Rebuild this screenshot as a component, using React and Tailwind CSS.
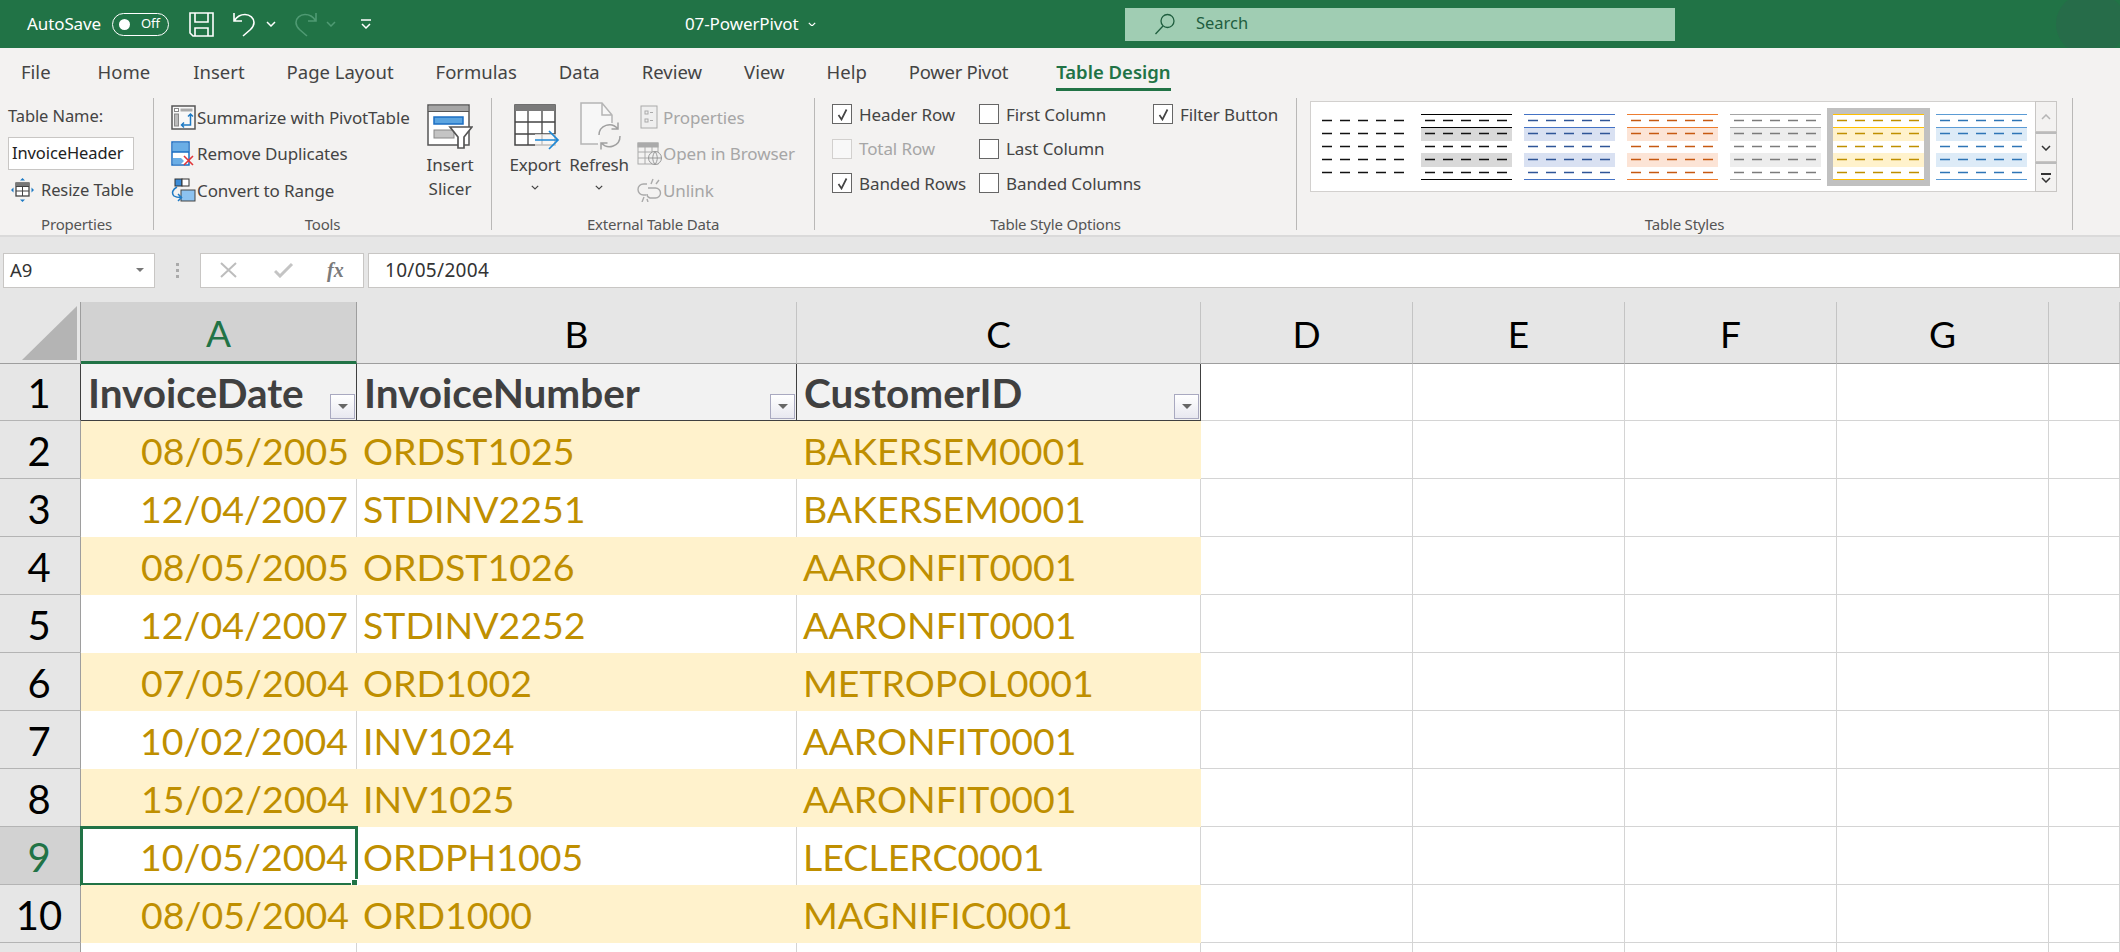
import React from "react";

const ui = "font-['Noto_Sans',sans-serif]";
const cellFont = "font-['Lato',sans-serif]";

// Title bar icons
const SaveIcon = () => (
  <svg width="25" height="25" viewBox="0 0 25 25" fill="none" stroke="#fff" strokeWidth="1.6">
    <path d="M1 1h23v23H4l-3-3z" />
    <path d="M6 1v9h13V1M6 24v-8h13v8" />
  </svg>
);
const UndoIcon = ({ dim }) => (
  <svg width="24" height="26" viewBox="0 0 24 26" fill="none" stroke={dim ? "#4f9a73" : "#fff"} strokeWidth="1.6" className={dim ? "-scale-x-100" : ""}>
    <path d="M1 2v8h8M1.5 9.5C4 5.5 8 3.5 12 3.5c5 0 9 3.5 9 8 0 3-1.5 5-3.5 7L10 25" />
  </svg>
);
const Chevron = ({ color = "#fff", size = 10 }) => (
  <svg width={size} height={size * 0.6} viewBox="0 0 10 6" fill="none" stroke={color} strokeWidth="1.5">
    <path d="M1 1l4 4 4-4" />
  </svg>
);

// Ribbon icons
const PivotIcon = () => (
  <svg width="25" height="25" viewBox="0 0 25 25" fill="none">
    <rect x="1" y="1" width="23" height="23" fill="#f8f8f8" stroke="#555" strokeWidth="1.5" />
    <rect x="3.500" y="3.500" width="4" height="3" fill="#fff" stroke="#888" />
    <rect x="9.500" y="3.500" width="12" height="3" fill="#aaa" />
    <rect x="3.500" y="9" width="4" height="12" fill="#bbb" stroke="#888" />
    <path d="M19.500 9v11H11M17 11.500L19.500 9l2.500 2.500M13 17.500L10.500 20l2.500 2.500" stroke="#1e7ac4" strokeWidth="1.500" />
  </svg>
);
const DuplicatesIcon = () => (
  <svg width="24" height="25" viewBox="0 0 24 25" fill="none">
    <rect x="1" y="1" width="17" height="23" fill="#fff" stroke="#1b6ec2" strokeWidth="1.500" />
    <rect x="2" y="2" width="15" height="9" fill="#6aaee6" />
    <path d="M1 11h17" stroke="#1b6ec2" strokeWidth="1.500" />
    <path d="M2 17h8l3 3-3 3H2z" fill="#6aaee6" />
    <path d="M13 15l9 9M22 15l-9 9" stroke="#e2363a" strokeWidth="1.600" />
  </svg>
);
const ConvertIcon = () => (
  <svg width="25" height="25" viewBox="0 0 25 25" fill="none">
    <rect x="4" y="1" width="7" height="7" fill="#3b8bd6" stroke="#333" />
    <rect x="11" y="1" width="7" height="7" fill="#fff" stroke="#333" />
    <rect x="10" y="12" width="14" height="11" fill="#8cc2f0" stroke="#444" />
    <path d="M6 9C2 11 0 15 3 18c1.500 1 4 1.500 7 1.500M7 16l3.500 3.500L7 23" stroke="#1e7ac4" strokeWidth="1.500" />
  </svg>
);
const ResizeIcon = () => (
  <svg width="23" height="24" viewBox="0 0 23 24" fill="none">
    <rect x="5" y="5" width="13" height="13" fill="#fff" stroke="#444" strokeWidth="1.300" />
    <path d="M5 8.500h13M5 13h13M11.500 5v13" stroke="#444" />
    <rect x="5" y="5" width="13" height="3" fill="#777" />
    <path d="M11.500 0l2.500 2.500H9zM11.500 24L9 21.500h5zM0 12l2.500-2.500v5zM23 12l-2.500-2.500v5z" fill="#1e7ac4" />
  </svg>
);
const SlicerIcon = () => (
  <svg width="46" height="46" viewBox="0 0 46 46" fill="none">
    <rect x="1" y="1" width="41" height="40" fill="#fff" stroke="#555" strokeWidth="1.500" />
    <rect x="2" y="2" width="39" height="5" fill="#a6a6a6" />
    <path d="M1 7.500h41" stroke="#555" />
    <rect x="7" y="13" width="29" height="7" fill="#5ba4e0" stroke="#1b6ec2" strokeWidth="1.500" />
    <rect x="7" y="26" width="20" height="8" fill="#c4c4c4" stroke="#888" />
    <path d="M23 23h22l-8 10v11h-6V33z" fill="#fff" stroke="#555" strokeWidth="1.700" />
  </svg>
);
const ExportIcon = () => (
  <svg width="46" height="46" viewBox="0 0 46 46" fill="none">
    <rect x="1" y="1" width="40" height="40" fill="#fff" stroke="#444" strokeWidth="1.500" />
    <rect x="1" y="1" width="40" height="6" fill="#7a7a7a" />
    <path d="M1 18h40M1 30h40M14 7v34M28 7v34" stroke="#444" strokeWidth="1.300" />
    <rect x="21" y="30" width="25" height="13" fill="#f3f2f1" opacity="0.7" />
    <path d="M21 36h23M35 27l9 9-9 9" stroke="#1e88d6" strokeWidth="1.700" />
  </svg>
);
const RefreshIcon = () => (
  <svg width="44" height="48" viewBox="0 0 44 48" fill="none">
    <path d="M1 1h21l10 12v10c-8 0-13 6-13 19H1z" fill="#f7f7f7" />
    <path d="M18 42H1V1h21l10 12v8M22 1v12h10" stroke="#b5b5b5" strokeWidth="1.500" />
    <path d="M19 33a10.500 10.500 0 0 1 18.500-6.500M40 34a10.500 10.500 0 0 1-18.500 7M38 20.500v6.500h-6.500M21 47.500V41h6.500" stroke="#a0a0a0" strokeWidth="1.500" />
  </svg>
);
const PropsIcon = () => (
  <svg width="18" height="24" viewBox="0 0 18 24" fill="none" stroke="#aaa">
    <rect x="1" y="1" width="16" height="22" fill="#efefef" />
    <rect x="5" y="6" width="3" height="3" />
    <rect x="5" y="14" width="3" height="3" />
    <path d="M10 7.500h3M10 15.500h3" />
  </svg>
);
const BrowserIcon = () => (
  <svg width="25" height="24" viewBox="0 0 25 24" fill="none" stroke="#aaa">
    <rect x="1" y="1" width="20" height="21" />
    <rect x="1" y="1" width="20" height="4" fill="#aaa" />
    <path d="M1 10h20M1 16h20M8 5v17M15 5v17" />
    <circle cx="18" cy="16" r="6.500" fill="#efefef" stroke="#999" />
    <path d="M11.500 16h13M18 9.500c-3 4-3 9 0 13M18 9.500c3 4 3 9 0 13" stroke="#999" />
  </svg>
);
const UnlinkIcon = () => (
  <svg width="25" height="24" viewBox="0 0 25 24" fill="none" stroke="#aaa" strokeWidth="1.400">
    <path d="M10 6H6.500a5.500 5.500 0 0 0 0 11H9M11 10h7.500a5 5 0 0 1 0 10H13a4 4 0 0 1-3-4" />
    <path d="M16 1l-2 5M22 2l-3 4M5 24l2-5M11 24l-1-3" />
  </svg>
);
const SearchIcon = () => (
  <svg width="21" height="22" viewBox="0 0 21 22" fill="none" stroke="#1f5e3f" strokeWidth="1.300">
    <circle cx="13.500" cy="8" r="6.500" />
    <path d="M9 13L1.500 21" />
  </svg>
);

const Check = ({ checked, dim, label }) => (
  <div className="flex items-center h-[34.500px]">
    <div className={`w-[20px] h-[20px] border flex items-center justify-center shrink-0 ${dim ? "border-[#d2d0ce] bg-[#f8f8f8]" : "border-[#666] bg-white"}`}>
      {checked && (
        <svg width="13" height="13" viewBox="0 0 13 13" fill="none" stroke="#444" strokeWidth="1.700">
          <path d="M2.500 7l3 4.500L10.500 1.500" />
        </svg>
      )}
    </div>
    <span className={`ml-[7px] text-[17px] whitespace-nowrap tracking-[-0.1px] ${dim ? "text-[#a6a6a6]" : "text-[#444]"}`}>{label}</span>
  </div>
);

const RibbonRow = ({ icon, label, dim }) => (
  <div className="flex items-center h-[36.500px]">
    <span className="w-[28px] flex justify-center shrink-0">{icon}</span>
    <span className={`text-[17px] whitespace-nowrap tracking-[-0.1px] ${dim ? "text-[#a6a6a6]" : "text-[#444]"}`}>{label}</span>
  </div>
);

const Group = ({ width, label, children }) => (
  <section className={`relative flex flex-col h-[132px] mt-[2px] border-r border-[#b9b8b7] shrink-0 ${width}`}>
    <div className="flex-1 min-h-0">{children}</div>
    <div className="h-[12px] flex items-center justify-center text-[15px] text-[#555] tracking-[-0.2px]">{label}</div>
  </section>
);

// One thumbnail of the table style gallery
const Swatch = ({ rule, dash, band, header }) => {
  const rows = [6, 19, 32, 45, 58];
  return (
    <svg width="91" height="66" viewBox="0 0 91 66" className="shrink-0">
      {band && <rect x="0" y="13" width="91" height="14" fill={band} />}
      {band && <rect x="0" y="39" width="91" height="14" fill={band} />}
      {rule && <path d="M0 .500h91M0 13.500h91M0 65.500h91" stroke={header || rule} strokeWidth="1.200" />}
      {rows.map((y) => (
        <path key={y} d={`M4 ${y + 0.5}h87`} stroke={dash} strokeWidth="1.300" strokeDasharray="10 8" fill="none" />
      ))}
    </svg>
  );
};

const ScrollBtn = ({ children, className }) => (
  <div className={`w-[22px] border border-[#c8c6c4] flex flex-col items-center justify-center bg-[#f3f2f1] ${className}`}>{children}</div>
);

const tabs = [
  { label: "File", cls: "mr-[5px]" },
  { label: "Home", cls: "mr-[1px]" },
  { label: "Insert", cls: "" },
  { label: "Page Layout", cls: "" },
  { label: "Formulas", cls: "" },
  { label: "Data", cls: "" },
  { label: "Review", cls: "" },
  { label: "View", cls: "" },
  { label: "Help", cls: "" },
  { label: "Power Pivot", cls: "tracking-[-0.3px]" },
];

const TitleBar = () => (
  <header className="relative flex items-center h-[48px] bg-[#217346] text-white overflow-hidden shrink-0">
    <span className="ml-[27px] text-[17px] w-[85px] tracking-[-0.1px]">AutoSave</span>
    <div className="w-[57px] h-[23px] rounded-full border border-white flex items-center justify-between pl-[6px] pr-[8px]">
      <span className="w-[11px] h-[11px] rounded-full bg-white" />
      <span className="text-[13px]">Off</span>
    </div>
    <span className="ml-[20px]"><SaveIcon /></span>
    <span className="ml-[19px]"><UndoIcon /></span>
    <span className="ml-[9px]"><Chevron /></span>
    <span className="ml-[17px]"><UndoIcon dim /></span>
    <span className="ml-[9px]"><Chevron color="#4f9a73" /></span>
    <svg width="12" height="10" viewBox="0 0 12 10" fill="none" stroke="#fff" strokeWidth="1.500" className="ml-[24px]">
      <path d="M1 1h10M2 5l4 4 4-4" />
    </svg>
    <span className="ml-[313px] text-[17px] w-[123px] tracking-[-0.1px]">07-PowerPivot</span>
    <Chevron size={8} />
    <div className="ml-[309px] w-[550px] h-[33px] bg-[#a0cdb3] flex items-center pl-[29px]">
      <SearchIcon />
      <span className="ml-[21px] text-[16.500px] text-[#1f5e3f] -mt-[2px]">Search</span>
    </div>
    <span className="absolute right-[-6px] top-[-6px] w-[70px] h-[60px] rounded-full bg-[#29694a] opacity-70" />
  </header>
);

const TabRow = () => (
  <nav className="flex items-center h-[48px] pl-[21px] gap-[42px] text-[18.500px] text-[#444] bg-[#f3f2f1] shrink-0">
    {tabs.map((t) => (
      <span key={t.label} className={`whitespace-nowrap ${t.cls}`}>{t.label}</span>
    ))}
    <span className="relative whitespace-nowrap font-semibold text-[#217346] ml-[6px]">
      Table Design
      <span className="absolute left-0 right-0 bottom-[-5px] h-[3px] bg-[#217346]" />
    </span>
  </nav>
);

const Ribbon = () => (
  <div className="flex h-[141px] bg-[#f3f2f1] border-b-2 border-[#dadada] shrink-0 overflow-hidden">
    <Group width="w-[154px]" label="Properties">
      <div className="pl-[8px] text-[#444] text-[16.500px] tracking-[-0.1px]">
        <div className="h-[37px] flex items-center">Table Name:</div>
        <div className="w-[126px] h-[33px] mt-[2px] border border-[#c8c6c4] bg-white flex items-center pl-[3px] text-[#222]">InvoiceHeader</div>
        <div className="h-[38px] flex items-center pl-[3px] mt-[1px]">
          <ResizeIcon />
          <span className="ml-[7px]">Resize Table</span>
        </div>
      </div>
    </Group>
    <Group width="w-[338px]" label="Tools">
      <div className="flex pl-[15px]">
        <div className="pt-[1px] w-[258px]">
          <RibbonRow icon={<PivotIcon />} label="Summarize with PivotTable" />
          <RibbonRow icon={<DuplicatesIcon />} label="Remove Duplicates" />
          <RibbonRow icon={<ConvertIcon />} label="Convert to Range" />
        </div>
        <div className="w-[46px] flex flex-col items-center pt-[6px] text-[17px] text-[#444] leading-[24px]">
          <SlicerIcon />
          <span className="mt-[3px]">Insert</span>
          <span>Slicer</span>
        </div>
      </div>
    </Group>
    <Group width="w-[323px]" label="External Table Data">
      <div className="flex pl-[12px] text-[17px] text-[#444]">
        <div className="w-[62px] flex flex-col items-center pt-[6px] tracking-[-0.2px]">
          <span className="ml-[3px]"><ExportIcon /></span>
          <span className="mt-[3px] leading-[24px]">Export</span>
          <span className="mt-[8px]"><Chevron color="#444" size={8} /></span>
        </div>
        <div className="w-[66px] flex flex-col items-center pt-[4px] tracking-[-0.2px]">
          <span className="ml-[5px]"><RefreshIcon /></span>
          <span className="mt-[3px] leading-[24px]">Refresh</span>
          <span className="mt-[8px]"><Chevron color="#444" size={8} /></span>
        </div>
        <div className="pt-[1px] ml-[3px]">
          <RibbonRow dim icon={<PropsIcon />} label="Properties" />
          <RibbonRow dim icon={<BrowserIcon />} label="Open in Browser" />
          <RibbonRow dim icon={<UnlinkIcon />} label="Unlink" />
        </div>
      </div>
    </Group>
    <Group width="w-[482px]" label="Table Style Options">
      <div className="flex pl-[17px] -mt-[1px]">
        <div className="w-[147px]">
          <Check checked label="Header Row" />
          <Check dim label="Total Row" />
          <Check checked label="Banded Rows" />
        </div>
        <div className="w-[174px]">
          <Check label="First Column" />
          <Check label="Last Column" />
          <Check label="Banded Columns" />
        </div>
        <Check checked label="Filter Button" />
      </div>
    </Group>
    <Group width="w-[776px]" label="Table Styles">
      <div className="flex ml-[13px] mt-[3px] w-[747px] h-[91px]">
        <div className="flex items-center w-[725px] h-[91px] bg-white border border-[#d2d0ce] border-r-0 pl-[7px] gap-[12px]">
          <Swatch dash="#111" />
          <Swatch rule="#000" dash="#111" band="#d9d9d9" />
          <Swatch rule="#4472c4" dash="#2f5597" band="#d9e1f2" />
          <Swatch rule="#ed7d31" dash="#c65911" band="#fce4d6" />
          <Swatch rule="#a5a5a5" dash="#7b7b7b" band="#ededed" />
          <div className="border-[6px] border-[#c0c0c0] -mx-[6px] h-[78px] flex items-center">
            <Swatch rule="#ffc000" dash="#bf8f00" band="#fff2cc" />
          </div>
          <Swatch rule="#5b9bd5" dash="#2e75b6" band="#ddebf7" />
        </div>
        <div className="flex flex-col w-[22px]">
          <ScrollBtn className="h-[31px]">
            <svg width="10" height="6" viewBox="0 0 10 6" fill="none" stroke="#b5b5b5" strokeWidth="1.500"><path d="M1 5l4-4 4 4" /></svg>
          </ScrollBtn>
          <ScrollBtn className="h-[30px] border-t-2 border-t-[#bbb]">
            <Chevron color="#333" />
          </ScrollBtn>
          <ScrollBtn className="h-[30px] border-t-2 border-t-[#bbb] gap-[2px]">
            <span className="w-[10px] h-[2px] bg-[#333]" />
            <Chevron color="#333" />
          </ScrollBtn>
        </div>
      </div>
    </Group>
  </div>
);

const FormulaBar = () => (
  <div className="flex items-center h-[65px] bg-[#e6e6e6] shrink-0 text-[#333] pt-[1px]">
    <div className="ml-[3px] w-[152px] h-[35px] bg-white border border-[#c8c6c4] flex items-center justify-between pl-[6px] pr-[10px]">
      <span className="text-[18.500px]">A9</span>
      <span className="w-0 h-0 border-x-[4px] border-x-transparent border-t-[4px] border-t-[#777]" />
    </div>
    <div className="w-[45px] flex flex-col items-center gap-[3px]">
      <span className="w-[3px] h-[3px] bg-[#aaa]" />
      <span className="w-[3px] h-[3px] bg-[#aaa]" />
      <span className="w-[3px] h-[3px] bg-[#aaa]" />
    </div>
    <div className="w-[164px] h-[35px] bg-white border border-[#c8c6c4] flex items-center pl-[19px]">
      <svg width="18" height="16" viewBox="0 0 18 16" fill="none" stroke="#bdbdbd" strokeWidth="2"><path d="M1 1l15 14M16 1L1 15" /></svg>
      <svg width="20" height="16" viewBox="0 0 20 16" fill="none" stroke="#c4c4c4" strokeWidth="3" className="ml-[36px]"><path d="M1 9l5 5L18 2" /></svg>
      <span className="ml-[33px] font-['Liberation_Serif',serif] italic font-bold text-[#7b7b7b] text-[20px] leading-none">fx</span>
    </div>
    <div className="ml-[4px] flex-1 h-[35px] bg-white border border-[#c8c6c4] flex items-center pl-[16px]">
      <span className="text-[19px] tracking-[0.3px]">10/05/2004</span>
    </div>
  </div>
);

const colWidths = "grid-cols-[81px_276px_440px_404px_212px_212px_212px_212px_1fr]";
const cols = ["A", "B", "C", "D", "E", "F", "G", ""];

const data = [
  ["08/05/2005", "ORDST1025", "BAKERSEM0001"],
  ["12/04/2007", "STDINV2251", "BAKERSEM0001"],
  ["08/05/2005", "ORDST1026", "AARONFIT0001"],
  ["12/04/2007", "STDINV2252", "AARONFIT0001"],
  ["07/05/2004", "ORD1002", "METROPOL0001"],
  ["10/02/2004", "INV1024", "AARONFIT0001"],
  ["15/02/2004", "INV1025", "AARONFIT0001"],
  ["10/05/2004", "ORDPH1005", "LECLERC0001"],
  ["08/05/2004", "ORD1000", "MAGNIFIC0001"],
];

const FilterBtn = () => (
  <span className="absolute right-[1px] bottom-[1px] w-[25px] h-[25px] border border-[#a9a9c0] bg-gradient-to-b from-white to-[#e8e8f0] flex items-center justify-center">
    <span className="w-0 h-0 border-x-[5px] border-x-transparent border-t-[5px] border-t-[#666]" />
  </span>
);

const RowHead = ({ n, active, dark }) => (
  <div className={`flex items-center justify-center border-r border-b pt-[2px] pr-[2px] text-[40px] border-b-[#b4b4b4] ${dark ? "border-r-[#404040]" : "border-r-[#9e9e9e]"} ${active ? "bg-[#d2d2d2] text-[#217346]" : "bg-[#e6e6e6] text-black"}`}>{n}</div>
);

const EmptyCells = ({ count }) =>
  Array.from({ length: count }).map((_, i) => <div key={i} className="border-r border-b border-[#d4d4d4]" />);

const Sheet = () => (
  <div className={`flex-1 min-h-0 overflow-hidden bg-white ${cellFont} text-[37.500px] leading-none`}>
    <div className={`grid ${colWidths} auto-rows-[58px] [grid-template-rows:62px_57px]`}>
      {/* column headers */}
      <div className="relative bg-[#e6e6e6] border-r border-b border-r-[#9e9e9e] border-b-[#9e9e9e] flex items-end justify-end pr-[3px] pb-[3px]">
        <svg width="55" height="54" viewBox="0 0 55 54"><path d="M55 0v54H0z" fill="#b4b4b4" /></svg>
      </div>
      {cols.map((c, i) => (
        <div
          key={i}
          className={`flex items-center justify-center border-r pt-[1px] text-[37px] ${
            c === "A"
              ? "bg-[#d2d2d2] text-[#217346] border-r-[#9e9e9e] border-b-[3px] border-b-[#217346]"
              : "bg-[#e6e6e6] text-black border-r-[#c4c4c4] border-b border-b-[#9e9e9e]"
          }`}
        >
          {c}
        </div>
      ))}

      {/* table header row */}
      <RowHead n={1} dark />
      {["InvoiceDate", "InvoiceNumber", "CustomerID"].map((h) => (
        <div key={h} className="relative bg-[#f2f2f2] border-r border-b border-[#404040] flex items-center pl-[7px] pt-[2px] text-[40.500px] font-bold text-[#404040]">
          {h}
          <FilterBtn />
        </div>
      ))}
      <EmptyCells count={5} />

      {/* data rows */}
      {data.map((row, r) => {
        const n = r + 2;
        const band = r % 2 === 0;
        const bg = band ? "bg-[#fff2cc]" : "bg-white border-r border-[#d4d4d4]";
        return (
          <React.Fragment key={n}>
            <RowHead n={n} active={n === 9} />
            <div className={`relative flex items-center justify-end pr-[8px] pt-[2px] text-[#bf8f00] ${bg}`}>
              {row[0]}
              {n === 9 && (
                <span className="absolute -left-[1px] -top-[1px] -right-[2px] -bottom-[1px] border-[3px] border-[#217346]">
                  <span className="absolute -right-[3px] -bottom-[3px] w-[7px] h-[7px] bg-[#217346] border border-white" />
                </span>
              )}
            </div>
            <div className={`flex items-center pl-[6px] pt-[2px] text-[#bf8f00] ${bg}`}>{row[1]}</div>
            <div className={`flex items-center pl-[6px] pt-[2px] text-[#bf8f00] ${bg}`}>{row[2]}</div>
            <EmptyCells count={5} />
          </React.Fragment>
        );
      })}

      {/* row 11 is only a sliver at the bottom of the window */}
      <RowHead />
      <EmptyCells count={8} />
    </div>
  </div>
);

export default function App() {
  return (
    <div className={`flex flex-col w-[2120px] h-[952px] overflow-hidden ${ui}`}>
      <TitleBar />
      <TabRow />
      <Ribbon />
      <FormulaBar />
      <Sheet />
    </div>
  );
}
